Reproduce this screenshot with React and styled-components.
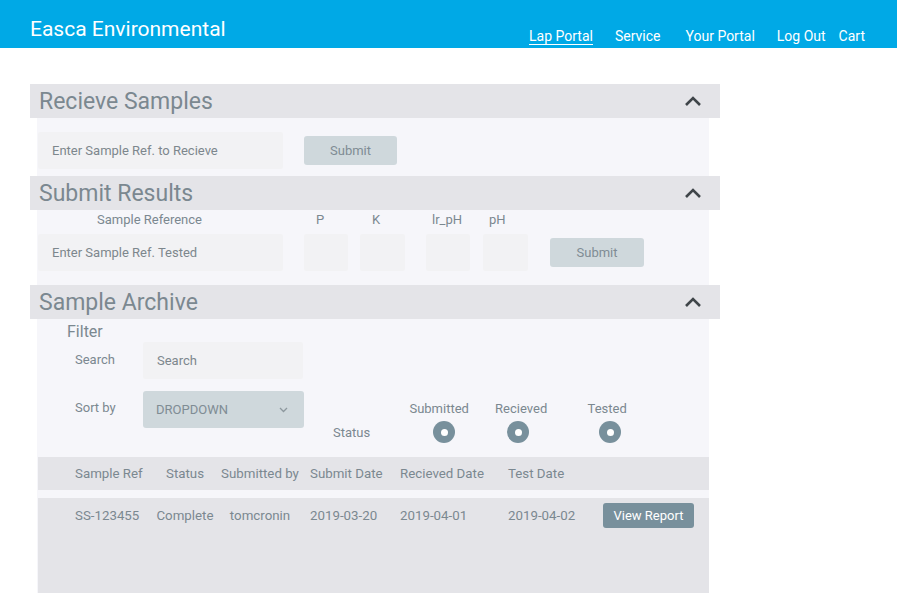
import styled, { createGlobalStyle } from "styled-components";

const GlobalStyle = createGlobalStyle`
  body {
    margin: 0;
    background: #ffffff;
    font-family: Roboto, "Liberation Sans", sans-serif;
  }
`;

const TopBar = styled.header`
  height: 48px;
  background: #00a9e6;
  display: flex;
  align-items: flex-end;
  justify-content: space-between;
  padding: 0 32px 0 30px;
  color: #fff;
  > h1 {
    margin: 0 0 7px;
    font-size: 21px;
    font-weight: 400;
    line-height: 24px;
  }
  > nav {
    display: flex;
    margin-bottom: 3px;
  }
`;

const NavItem = styled.a`
  color: #fff;
  text-decoration: none;
  font-size: 14px;
  line-height: 16px;
  margin-left: ${(p) => p.$gap}px;
  border-bottom: 1px solid ${(p) => (p.$active ? "#fff" : "transparent")};
`;

const Main = styled.main`
  width: 690px;
  margin: 36px 0 0 30px;
`;

const SectionBar = styled.div`
  height: 34px;
  background: #e4e4e8;
  display: flex;
  align-items: center;
  justify-content: space-between;
  padding: 0 18px 0 9px;
  > h2 {
    margin: 0;
    font-size: 23px;
    font-weight: 400;
    color: #7b8890;
  }
`;

const SectionBody = styled.div`
  margin: 0 11px 0 7px;
  background: #f6f6fa;
  padding: ${(p) => p.$pad};
  height: ${(p) => p.$h}px;
  box-sizing: border-box;
`;

const Row = styled.div`
  display: flex;
  align-items: ${(p) => p.$align || "center"};
  height: ${(p) => (p.$h ? `${p.$h}px` : "auto")};
  margin-top: ${(p) => p.$mt || 0}px;
`;

const TextInput = styled.div`
  width: ${(p) => p.$w}px;
  height: 37px;
  background: #f2f2f4;
  border-radius: 2px;
  display: flex;
  align-items: center;
  padding-left: 14px;
  box-sizing: border-box;
  font-size: 13px;
  color: #7d878d;
`;

const FlatButton = styled.button`
  width: ${(p) => p.$w}px;
  height: 29px;
  margin-left: ${(p) => p.$ml}px;
  margin-top: ${(p) => p.$mt || 0}px;
  border: none;
  border-radius: 3px;
  background: #cfd8dc;
  color: #7f8c94;
  font-family: inherit;
  font-size: 13px;
`;

const Field = styled.div`
  display: flex;
  flex-direction: column;
  margin-left: ${(p) => p.$ml || 0}px;
  > span {
    font-size: 13px;
    color: #7b8890;
    line-height: 18px;
    margin: 0 0 5px ${(p) => p.$lp}px;
  }
`;

const FilterTitle = styled.div`
  font-size: 16px;
  color: #7b8890;
  margin-left: 29px;
  line-height: 20px;
`;

const FilterLabel = styled.span`
  width: 68px;
  padding-left: 37px;
  font-size: 13px;
  color: #7b8890;
  margin-top: ${(p) => p.$mt || 0}px;
`;

const Dropdown = styled.div`
  width: 161px;
  height: 37px;
  background: #cfd8dc;
  border-radius: 3px;
  display: flex;
  align-items: center;
  justify-content: space-between;
  padding: 0 16px 0 13px;
  box-sizing: border-box;
  font-size: 13px;
  color: #7f8c94;
`;

const StatusLabel = styled.span`
  font-size: 13px;
  color: #7b8890;
  margin: 34px 0 0 29px;
`;

const StatusOption = styled.div`
  width: 66px;
  display: flex;
  flex-direction: column;
  align-items: center;
  margin: 10px 0 0 ${(p) => p.$ml}px;
  > span {
    font-size: 13px;
    color: #7b8890;
    line-height: 16px;
    margin-bottom: 4px;
  }
`;

const Radio = styled.span`
  width: 22px;
  height: 22px;
  border-radius: 50%;
  background: #78909c;
  display: flex;
  align-items: center;
  justify-content: center;
  transform: translateX(${(p) => p.$shift || 0}px);
  &::after {
    content: "";
    width: 7px;
    height: 7px;
    border-radius: 50%;
    background: #fff;
  }
`;

const TableRow = styled.div`
  display: grid;
  grid-template-columns: 75px 70px 80px 90px 108px 95px 1fr;
  align-items: ${(p) => (p.$head ? "center" : "start")};
  height: ${(p) => p.$h}px;
  background: #e4e4e8;
  padding: ${(p) => (p.$head ? "0" : "5px")} 0 0 37px;
  margin-top: ${(p) => p.$mt}px;
  box-sizing: border-box;
  font-size: 13.3px;
  color: #7b8890;
`;

const Cell = styled.div`
  text-align: ${(p) => (p.$center ? "center" : "left")};
  padding-left: ${(p) => p.$pl || 0}px;
  line-height: ${(p) => (p.$head ? "normal" : "25px")};
  white-space: nowrap;
`;

const ReportButton = styled.button`
  width: 91px;
  height: 25px;
  border: none;
  border-radius: 3px;
  background: #78909c;
  color: #fff;
  font-family: inherit;
  font-size: 13px;
`;

const ChevronUp = () => (
  <svg width="18" height="12" viewBox="0 0 18 12">
    <path d="M2 10 L9 3 L16 10" fill="none" stroke="#3f4549" strokeWidth="2.6" />
  </svg>
);

const ChevronDown = () => (
  <svg width="9" height="6" viewBox="0 0 9 6">
    <path d="M1 1 L4.5 4.5 L8 1" fill="none" stroke="#8d989e" strokeWidth="1.3" />
  </svg>
);

const Section = ({ title }) => (
  <SectionBar>
    <h2>{title}</h2>
    <ChevronUp />
  </SectionBar>
);

const navItems = [
  { label: "Lap Portal", gap: 0, active: true },
  { label: "Service", gap: 22 },
  { label: "Your Portal", gap: 25 },
  { label: "Log Out", gap: 22 },
  { label: "Cart", gap: 13 },
];

const results = [
  { label: "P", w: 44, ml: 21, lp: 12 },
  { label: "K", w: 45, ml: 12, lp: 12 },
  { label: "lr_pH", w: 44, ml: 21, lp: 6 },
  { label: "pH", w: 45, ml: 13, lp: 6 },
];

const statuses = [
  { label: "Submitted", ml: 36, shift: 5 },
  { label: "Recieved", ml: 16, shift: -3 },
  { label: "Tested", ml: 20, shift: 3 },
];

export default function App() {
  return (
    <>
      <GlobalStyle />
      <TopBar>
        <h1>Easca Environmental</h1>
        <nav>
          {navItems.map((n) => (
            <NavItem key={n.label} $gap={n.gap} $active={n.active}>
              {n.label}
            </NavItem>
          ))}
        </nav>
      </TopBar>
      <Main>
        <Section title="Recieve Samples" />
        <SectionBody $pad="14px 0 0 1px" $h={58}>
          <Row>
            <TextInput $w={245}>Enter Sample Ref. to Recieve</TextInput>
            <FlatButton $w={93} $ml={21}>Submit</FlatButton>
          </Row>
        </SectionBody>

        <Section title="Submit Results" />
        <SectionBody $pad="1px 0 0 1px" $h={75}>
          <Row $align="flex-start">
            <Field $lp={59}>
              <span>Sample Reference</span>
              <TextInput $w={245}>Enter Sample Ref. Tested</TextInput>
            </Field>
            {results.map((r) => (
              <Field key={r.label} $ml={r.ml} $lp={r.lp}>
                <span>{r.label}</span>
                <TextInput $w={r.w} />
              </Field>
            ))}
            <FlatButton $w={94} $ml={22} $mt={27}>Submit</FlatButton>
          </Row>
        </SectionBody>

        <Section title="Sample Archive" />
        <SectionBody $pad="3px 0 0 1px" $h={274}>
          <FilterTitle>Filter</FilterTitle>
          <Row>
            <FilterLabel $mt={-3}>Search</FilterLabel>
            <TextInput $w={160}>Search</TextInput>
          </Row>
          <Row $align="flex-start" $h={37} $mt={12}>
            <FilterLabel $mt={9}>Sort by</FilterLabel>
            <Dropdown>
              DROPDOWN
              <ChevronDown />
            </Dropdown>
            <StatusLabel>Status</StatusLabel>
            {statuses.map((s) => (
              <StatusOption key={s.label} $ml={s.ml}>
                <span>{s.label}</span>
                <Radio $shift={s.shift} />
              </StatusOption>
            ))}
          </Row>
          <TableRow $head $h={33} $mt={29}>
            <Cell $head>Sample Ref</Cell>
            <Cell $head $center>Status</Cell>
            <Cell $head $center>Submitted by</Cell>
            <Cell $head $pl={10}>Submit Date</Cell>
            <Cell $head $pl={10}>Recieved Date</Cell>
            <Cell $head $pl={10}>Test Date</Cell>
            <Cell $head />
          </TableRow>
          <TableRow $h={95} $mt={8}>
            <Cell>SS-123455</Cell>
            <Cell $center>Complete</Cell>
            <Cell $center>tomcronin</Cell>
            <Cell $pl={10}>2019-03-20</Cell>
            <Cell $pl={10}>2019-04-01</Cell>
            <Cell $pl={10}>2019-04-02</Cell>
            <Cell $pl={10}>
              <ReportButton>View Report</ReportButton>
            </Cell>
          </TableRow>
        </SectionBody>
      </Main>
    </>
  );
}
